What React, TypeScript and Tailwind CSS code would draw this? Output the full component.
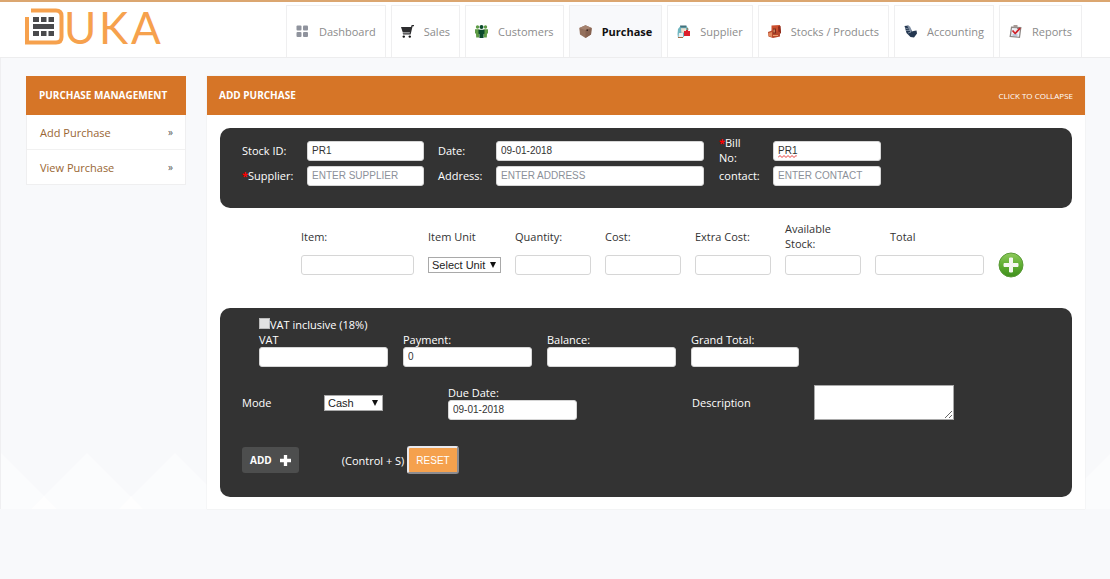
import { useState } from 'react';
import type { ComponentProps, ReactNode } from 'react';

const Logo = () => (
  <svg width="146" height="56" viewBox="22 0 146 56" role="img" aria-label="Duka">
    <path
      d="M27 15V40.500H56Q61.500 40.500 61.500 35V14Q61.500 8.500 56 8.500H31"
      fill="none"
      stroke="#f6a14d"
      strokeWidth="4"
    />
    <g fill="#4a4a4c">
      <path d="M33 15h6v5h-6zM41 15h5.500v5H41zM48.500 15H54v5h-5.500z" />
      <path d="M33 22h21v5H33z" />
      <path d="M33 29h6v5h-6zM41 29h5.500v5H41zM48.500 29H54v5h-5.500z" />
    </g>
    <g fontSize="44" fill="#f6a14d" fontFamily="Lato, sans-serif">
      <text x="64" y="42">
        U
      </text>
      <text x="99" y="42">
        K
      </text>
      <text x="131" y="42">
        A
      </text>
    </g>
  </svg>
);

const DashboardIcon = () => (
  <svg width="13" height="13" viewBox="0 0 13 13" fill="#8f939d">
    <rect x="0.500" y="0.500" width="5" height="5" rx="1" />
    <rect x="7" y="0.500" width="5" height="5" rx="1" />
    <rect x="0.500" y="7" width="5" height="5" rx="1" />
    <rect x="7" y="7" width="5" height="5" rx="1" />
  </svg>
);

const CartIcon = () => (
  <svg width="13" height="13" viewBox="0 0 13 13">
    <path d="M0 2h10l.7-2H13v1.300h-1.400L9.600 9.500H2.200L1.600 8.300H8.600L9 7.400H1.800z" fill="#2d2d2f" />
    <circle cx="2.800" cy="11.600" r="1.200" fill="#111" />
    <circle cx="8.800" cy="11.600" r="1.200" fill="#111" />
  </svg>
);

const CustomersIcon = () => (
  <svg width="13" height="13" viewBox="0 0 13 13">
    <g fill="#5d9b45">
      <circle cx="2.500" cy="2" r="1.700" />
      <circle cx="10.500" cy="2" r="1.700" />
      <path d="M0 4.200h4.500V8L4 12.500H1.200L1 9 0 8zM13 4.200H8.500V8l.5 4.500h2.800L12 9l1-1z" />
    </g>
    <circle cx="6.500" cy="2" r="2" fill="#0b4a2b" />
    <path d="M3.500 4.800h6v4L8.600 9v4H4.400V9l-.9-.3z" fill="#0b4a2b" />
  </svg>
);

const PurchaseIcon = () => (
  <svg width="13" height="13" viewBox="0 0 13 13">
    <path d="M.3 3 6.500.200 12.700 3 12 9.500 6.500 13 1 9.500z" fill="#94705c" />
    <path d="M.3 3 6.500.200 12.700 3 6.500 5z" fill="#a58370" />
    <path d="M6.500 5 12.700 3 12 9.500 6.500 13z" fill="#866250" />
    <path d="M7.500 4.500H9v1.500H7.500z" fill="#3b2620" />
  </svg>
);

const SupplierIcon = () => (
  <svg width="13" height="13" viewBox="0 0 13 13">
    <path d="M1 4 3.500 1h6L11.500 4l-1 4-5 5H1L.500 9z" fill="#6fb6c0" />
    <path d="M3 .500h6.500L9 2.500H3.500z" fill="#44717c" />
    <path d="M4 3.200h5V7L4.500 8z" fill="#f0dfcd" />
    <path d="M2 8h4v4.500H1.500z" fill="#e9eef0" />
    <path d="M7 6h2V5h2v1h2v5H7z" fill="#dc1f2b" />
    <path d="M1 12h5v1H1zM9.500 2.500 11.500 4l-1 1z" fill="#a06c43" />
  </svg>
);

const StocksIcon = () => (
  <svg width="13" height="13" viewBox="0 0 13 13">
    <path d="M3.500.500 12 0l1 8-3 1.500H3.500z" fill="#cb4e2d" />
    <path d="M10 1.500 12.500 1l.5 7-2.500 1.500z" fill="#8c2b1b" />
    <path d="M0 7l4-1.500 8 1.500v4.500L5 13 .500 11.500z" fill="#b8482b" />
    <path d="M.5 8 4 7v5L.500 11z" fill="#e28a5e" />
    <path d="M5 3.500h3v5H5z" fill="#7c2a1b" />
    <path d="M5.500 4.500h1.200v3H5.500zM5 10h5v1H5z" fill="#eba06d" />
  </svg>
);

const AccountingIcon = () => (
  <svg width="13" height="13" viewBox="0 0 13 13">
    <path d="M.5 1 4.500.500 6.500 4l2 2.500L9.500 6l3-.5.5 3-3 4-3.500-.5L2.500 8z" fill="#243750" />
    <path d="m3 .500 3 1L8 6 6.500 7.500z" fill="#8290a3" />
    <path d="m1 3 3.500 1M2 5.500l4 0M4 8l3-1" stroke="#9aa8b8" strokeWidth="0.700" />
  </svg>
);

const ReportsIcon = () => (
  <svg width="13" height="13" viewBox="0 0 13 13">
    <path d="M2 1.500 12.500 2 11 13 .500 12z" fill="#8d8683" />
    <path d="M3 3 11 3.300 10 11.700 2 11z" fill="#eceef4" />
    <path d="M4.500 0h4v2.500h-4z" fill="#a69b96" />
    <path d="m3.500 5.500 2.700 3 5-5.500" fill="none" stroke="#cf2229" strokeWidth="1.800" />
    <path d="M3.500 10h5" stroke="#8ea0c0" />
  </svg>
);

const AddRowIcon = () => (
  <svg width="26" height="26" viewBox="0 0 26 26">
    <defs>
      <linearGradient id="addRow" x1="0" y1="0" x2="0" y2="1">
        <stop offset="0" stopColor="#8fca5c" />
        <stop offset="0.500" stopColor="#5fae33" />
        <stop offset="1" stopColor="#3f8f1c" />
      </linearGradient>
    </defs>
    <circle cx="13" cy="13" r="12" fill="url(#addRow)" stroke="#5a9a38" />
    <path d="M11.500 6h3v5.500H20v3h-5.500V20h-3v-5.500H6v-3h5.500z" fill="#f4f7f1" stroke="#f4f7f1" />
  </svg>
);

const navItems = [
  { label: 'Dashboard', icon: <DashboardIcon /> },
  { label: 'Sales', icon: <CartIcon /> },
  { label: 'Customers', icon: <CustomersIcon /> },
  { label: 'Purchase', icon: <PurchaseIcon />, active: true },
  { label: 'Supplier', icon: <SupplierIcon /> },
  { label: 'Stocks / Products', icon: <StocksIcon /> },
  { label: 'Accounting', icon: <AccountingIcon /> },
  { label: 'Reports', icon: <ReportsIcon /> },
];

const Input = (props: ComponentProps<'input'>) => (
  <input
    type="text"
    className="block h-5 w-full rounded-[3px] border border-[#d6d6d6] bg-white px-1 pb-px font-[Liberation_Sans,sans-serif] text-[10px] text-[#333] placeholder:text-[#8b9099]"
    {...props}
  />
);

const Select = ({ children, ...props }: ComponentProps<'select'>) => (
  <div className="relative w-full">
    <select
      className="block h-4 w-full appearance-none border border-[#a9a9a9] bg-white pl-[3px] font-[Liberation_Sans,sans-serif] text-[11px] leading-[14px] text-[#222]"
      {...props}
    >
      {children}
    </select>
    <svg
      className="pointer-events-none absolute top-[5px] right-[5px]"
      width="6"
      height="6"
      viewBox="0 0 6 6"
      aria-hidden="true"
    >
      <path d="M0 0h6L3 6z" fill="#111" />
    </svg>
  </div>
);

const SpellingMark = () => (
  <svg
    className="pointer-events-none absolute bottom-[3px] left-[5px]"
    width="19"
    height="3"
    viewBox="0 0 19 3"
    aria-hidden="true"
  >
    <path
      d="M0 2.500 2 .500l2 2 2-2 2 2 2-2 2 2 2-2 2 2 2-2 1 1"
      fill="none"
      stroke="#e53935"
    />
  </svg>
);

const Required = () => <span className="font-bold text-[#f00]">*</span>;

type FieldProps = { id: string; label: string; children: ReactNode };

const Field = ({ id, label, children }: FieldProps) => (
  <div className="flex flex-col">
    <label htmlFor={id}>{label}</label>
    {children}
  </div>
);

const itemColumns = [
  { id: 'quantity', label: 'Quantity:' },
  { id: 'cost', label: 'Cost:' },
  { id: 'extraCost', label: 'Extra Cost:' },
  { id: 'availableStock', label: 'Available Stock:' },
];

export default function App() {
  const [collapsed, setCollapsed] = useState(false);

  return (
    <div className="min-h-screen bg-[#f8f9fb] font-[Open_Sans,Noto_Sans,sans-serif] text-[11px] leading-[15px] text-[#333]">
      <header className="flex items-end justify-between border-t-2 border-b border-t-[#dba670] border-b-[#ededee] bg-white pr-7 pl-[22px]">
        <a href="#home" className="-mb-px">
          <Logo />
        </a>
        <nav className="flex gap-[5px] pt-[3px]">
          {navItems.map((item) => (
            <a
              key={item.label}
              href={`#${item.label}`}
              className={`flex h-[52px] items-center gap-[10px] border border-b-0 border-[#efeff0] px-[9px] pb-px whitespace-nowrap ${
                item.active ? 'bg-[#f8f9fb] font-bold text-[#111]' : 'text-[#8c8c8c]'
              }`}
            >
              {item.icon}
              {item.label}
            </a>
          ))}
        </nav>
      </header>

      <div className="relative flex items-start gap-[21px] border-l border-[#efeff1] pr-[25px] pl-[25px]">
        <svg
          className="absolute bottom-0 left-0 h-14 w-full"
          preserveAspectRatio="xMinYMax slice"
          viewBox="0 0 1110 56"
          aria-hidden="true"
        >
          <path
            d="M0 0 56 56H0zM30 56 86 0l56 56zM118 56l56-56 56 56zM1054 56l56-56v56z"
            fill="#fbfcfd"
          />
          <path d="M30 56 43 43l13 13zM118 56l12-13 12 13z" fill="#fefefe" />
        </svg>

        <aside className="relative mt-[18px] w-40 shrink-0 border border-[#efeff0] bg-white">
          <h2 className="-mx-px -mt-px bg-[#d67527] px-[13px] py-3 text-[10px] font-bold text-white">
            PURCHASE MANAGEMENT
          </h2>
          <ul className="divide-y divide-[#f1f1f1] text-[#996633]">
            {['Add Purchase', 'View Purchase'].map((item) => (
              <li key={item}>
                <a href={`#${item}`} className="flex h-[34px] items-center justify-between pr-3 pl-[13px]">
                  {item}
                  <span className="text-[10px] text-[#555]">»</span>
                </a>
              </li>
            ))}
          </ul>
        </aside>

        <main className="relative mt-[18px] min-w-0 flex-1 bg-white shadow-[0_0_1px_#d8d8dc]">
          <div className="flex items-center justify-between bg-[#d67527] px-3 py-3 text-white">
            <h1 className="text-[10px] font-bold">ADD PURCHASE</h1>
            <button type="button" className="text-[8px]" onClick={() => setCollapsed(!collapsed)}>
              CLICK TO COLLAPSE
            </button>
          </div>

          {!collapsed && (
            <form className="px-[13px] pt-[13px] pb-3">
              <section className="grid grid-cols-[65px_117px_14px_58px_208px_15px_54px_108px] grid-rows-[30px_20px] items-center rounded-[10px] bg-[#333] px-[22px] pt-2 pb-[22px] text-white">
                <label htmlFor="stockId" className="pb-0.5">
                  Stock ID:
                </label>
                <Input id="stockId" defaultValue="PR1" />
                <label htmlFor="date" className="col-start-4 pb-0.5">
                  Date:
                </label>
                <Input id="date" defaultValue="09-01-2018" />
                <label htmlFor="billNo" className="col-start-7 pb-0.5">
                  <Required />
                  Bill
                  <br />
                  No:
                </label>
                <div className="relative">
                  <Input id="billNo" defaultValue="PR1" />
                  <SpellingMark />
                </div>
                <label htmlFor="supplier" className="pb-0.5">
                  <Required />
                  Supplier:
                </label>
                <Input id="supplier" placeholder="ENTER SUPPLIER" />
                <label htmlFor="address" className="col-start-4 pb-0.5">
                  Address:
                </label>
                <Input id="address" placeholder="ENTER ADDRESS" />
                <label htmlFor="contact" className="col-start-7 pb-0.5">
                  contact:
                </label>
                <Input id="contact" placeholder="ENTER CONTACT" />
              </section>

              <section className="grid grid-flow-col grid-cols-[113px_73px_76px_76px_76px_76px_109px_26px] grid-rows-[30px_28px] items-center gap-x-[14px] pt-[13px] pb-[29px] pl-[81px]">
                <label htmlFor="item">Item:</label>
                <Input id="item" />
                <label htmlFor="itemUnit">Item Unit</label>
                <Select id="itemUnit">
                  <option>Select Unit</option>
                </Select>
                {itemColumns.map((column) => (
                  <div key={column.id} className="contents">
                    <label htmlFor={column.id} className="max-w-16">
                      {column.label}
                    </label>
                    <Input id={column.id} />
                  </div>
                ))}
                <label htmlFor="total" className="pl-[15px]">
                  Total
                </label>
                <Input id="total" />
                <button type="button" aria-label="Add item" className="row-start-2">
                  <AddRowIcon />
                </button>
              </section>

              <section className="rounded-[10px] bg-[#333] px-[22px] pt-[9px] pb-[23px] text-white">
                <div className="pl-[17px]">
                  <label className="flex items-center">
                    <input
                      type="checkbox"
                      className="mb-[3px] size-[11px] appearance-none border border-[#bbb] bg-[#e2e2e2] checked:bg-[#3b82f6]"
                    />
                    VAT inclusive (18%)
                  </label>
                  <div className="grid grid-cols-[129px_129px_129px_108px] gap-x-[15px]">
                    <Field id="vat" label="VAT">
                      <Input id="vat" />
                    </Field>
                    <Field id="payment" label="Payment:">
                      <Input id="payment" defaultValue="0" />
                    </Field>
                    <Field id="balance" label="Balance:">
                      <Input id="balance" />
                    </Field>
                    <Field id="grandTotal" label="Grand Total:">
                      <Input id="grandTotal" />
                    </Field>
                  </div>
                </div>

                <div className="mt-[18px] grid grid-cols-[82px_59px_65px_129px_115px_122px_140px] items-center">
                  <label htmlFor="mode">Mode</label>
                  <Select id="mode">
                    <option>Cash</option>
                  </Select>
                  <div className="col-start-4">
                    <Field id="dueDate" label="Due Date:">
                      <Input id="dueDate" defaultValue="09-01-2018" />
                    </Field>
                  </div>
                  <label htmlFor="description" className="col-start-6">
                    Description
                  </label>
                  <textarea
                    id="description"
                    className="block h-[35px] w-full border border-[#a9a9a9] bg-white px-1 text-black"
                  />
                </div>

                <div className="mt-[26px] flex items-center">
                  <button
                    type="submit"
                    className="flex h-[26px] items-center gap-2 rounded-[3px] bg-[#4d4e4e] px-2 text-[10px] font-bold"
                  >
                    ADD
                    <svg width="11" height="11" viewBox="0 0 10 10" fill="#fff">
                      <path d="M3.500 0h3v3.500H10v3H6.500V10h-3V6.500H0v-3h3.500z" />
                    </svg>
                  </button>
                  <span className="mr-[3px] ml-[43px]">(Control + S)</span>
                  <button
                    type="reset"
                    className="h-7 rounded-[3px] border-2 border-t-[#e9e9ee] border-r-[#8c8c91] border-b-[#8c8c91] border-l-[#e9e9ee] bg-[#f5a14d] px-[7px] font-[Liberation_Sans,sans-serif] text-[10px] text-white"
                  >
                    RESET
                  </button>
                </div>
              </section>
            </form>
          )}
        </main>
      </div>
    </div>
  );
}
